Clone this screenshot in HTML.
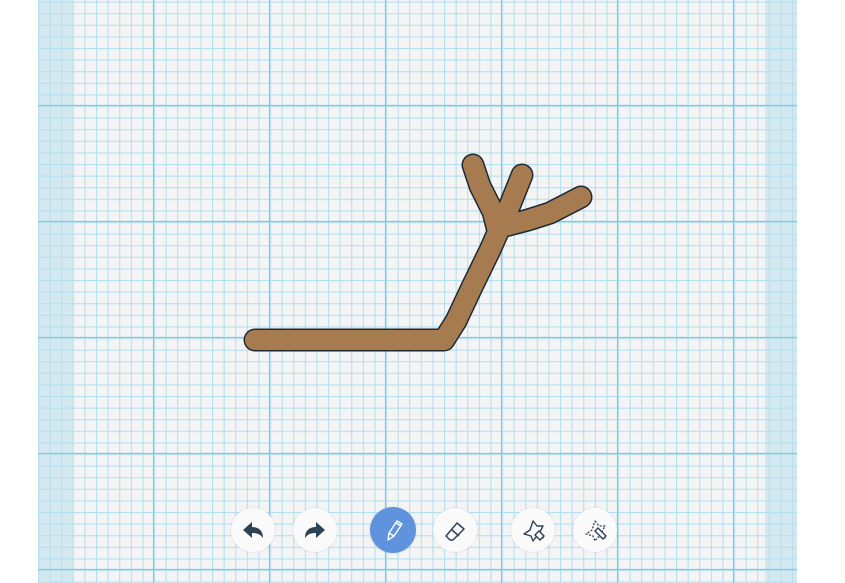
<!DOCTYPE html>
<html><head><style>
body{margin:0;width:845px;height:583px;background:#fff;overflow:hidden;position:relative;font-family:"Liberation Sans",sans-serif}
.btn{position:absolute;width:44px;height:44px;border-radius:50%;background:#fafafa;box-shadow:0 0 2px rgba(0,0,0,.12);top:508px}
.btn svg{position:absolute;left:0;top:0}
</style></head><body>
<svg width="845" height="583" style="position:absolute;left:0;top:0">
<defs>
<pattern id="mn" x="38" y="1.6" width="11.6" height="11.6" patternUnits="userSpaceOnUse">
<path d="M0.5 0V11.6M0 0.5H11.6" stroke="#b3e0f0" stroke-width="1.2" fill="none"/>
</pattern>
<pattern id="mj" x="38" y="-10" width="116" height="116" patternUnits="userSpaceOnUse">
<path d="M116 0V116M0 116H116" stroke="#8cc6da" stroke-width="2.2" fill="none"/>
</pattern>
</defs>
<rect x="38" y="0" width="759" height="583" fill="#f4f4f4"/>
<rect x="38" y="0" width="35" height="583" fill="#d4e8ef"/>
<rect x="765" y="0" width="32" height="583" fill="#d4e8ef"/>
<rect x="38" y="0" width="759" height="583" fill="url(#mn)"/>
<rect x="38" y="0" width="759" height="583" fill="url(#mj)"/>
<g fill="none" stroke-linecap="round" stroke-linejoin="round">
<g stroke="#1d2a36" stroke-width="23">
<path d="M255 340H444L456 321L472 287L490 250L498 232L493 212L480 186L473 165"/>
<path d="M503 222L512 200L522 175"/>
<path d="M505 226L528 220L550 213L581 197"/>
</g>
<g stroke="#a77b50" stroke-width="20">
<path d="M255 340H444L456 321L472 287L490 250L498 232L493 212L480 186L473 165"/>
<path d="M503 222L512 200L522 175"/>
<path d="M505 226L528 220L550 213L581 197"/>
</g>
</g>
</svg>
<div class="btn" style="left:231px"><svg width="44" height="44"><path d="M12 22l9-8v5c6 0 11 3 11 11c-3-4-6-5-11-5v5z" fill="#2f4154"/></svg></div>
<div class="btn" style="left:293px"><svg width="44" height="44"><path d="M32 22l-9-8v5c-6 0-11 3-11 11c3-4 6-5 11-5v5z" fill="#2f4154"/></svg></div>
<div class="btn" style="left:370px;background:#5f93dd;top:507px;width:46px;height:46px"><svg width="46" height="46"><path d="M18 33l1-7 8-12 5 3-8 12zM19 26l5 3M26 16l5 3" stroke="#fff" stroke-width="1.4" fill="none" stroke-linejoin="round"/></svg></div>
<div class="btn" style="left:433px"><svg width="44" height="44"><path d="M17 32l-4-4 11-13 7 6-11 11zM19 22l7 6" stroke="#2f4154" stroke-width="1.5" fill="none" stroke-linejoin="round"/></svg></div>
<div class="btn" style="left:511px"><svg width="44" height="44"><path d="M22 13l4 5 6 0-3 6 3 6-7-1-3 4-2-5-7-2 6-4z" stroke="#2f4154" stroke-width="1.4" fill="#fafafa" stroke-linejoin="round"/><path d="M24 27l4-4 5 5-4 4z" stroke="#2f4154" stroke-width="1.4" fill="#fafafa"/></svg></div>
<div class="btn" style="left:573px"><svg width="44" height="44"><path d="M22 13l4 5 6 0-3 6 3 6-7-1-3 4-2-5-7-2 6-4z" stroke="#2f4154" stroke-width="1.3" stroke-dasharray="2 1.5" fill="#fafafa" stroke-linejoin="round"/><path d="M22 23l3-3 8 8-3 3z" stroke="#2f4154" stroke-width="1.4" fill="#fafafa"/></svg></div>
</body></html>
